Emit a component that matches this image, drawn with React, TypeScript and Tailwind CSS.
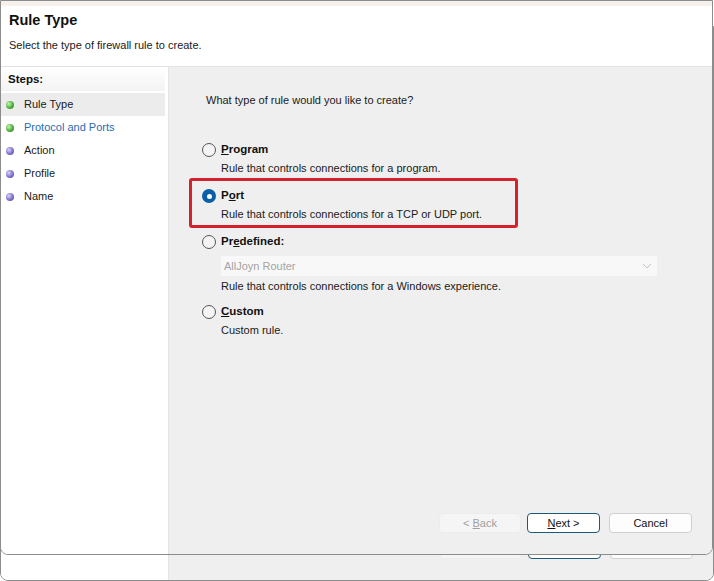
import React from "react"

const font = { fontFamily: '"Liberation Sans", Arial, sans-serif' }

function Bullet({ done }: { done: boolean }) {
  return (
    <span
      className={
        done
          ? "w-[8px] h-[8px] rounded-full bg-[radial-gradient(circle_at_35%_35%,#c8f5b0,#45a935_60%,#2f7d25)]"
          : "w-[8px] h-[8px] rounded-full bg-[radial-gradient(circle_at_35%_35%,#d9d2f5,#7a68c8_60%,#5546a0)]"
      }
    />
  )
}

function Radio({ checked }: { checked?: boolean }) {
  if (checked)
    return (
      <span className="w-[14px] h-[14px] rounded-full bg-[#0a5ea8] flex items-center justify-center shrink-0">
        <span className="w-[5px] h-[5px] rounded-full bg-white" />
      </span>
    )
  return <span className="w-[14px] h-[14px] rounded-full border border-[#555] bg-[#f4f4f4] shrink-0" />
}

function Option({
  label,
  desc,
  checked,
  children,
}: {
  label: React.ReactNode
  desc: string
  checked?: boolean
  children?: React.ReactNode
}) {
  return (
    <div className="flex flex-col">
      <div className="flex items-center h-[16px] ml-[33px]">
        <Radio checked={checked} />
        <span className="ml-[5px] font-bold text-[11.5px] text-[#111]">{label}</span>
      </div>
      {children}
      <div className="ml-[52px] mt-[2px] h-[16px] leading-[16px] text-[11px] text-[#1a1a1a]">{desc}</div>
    </div>
  )
}

function Buttons({ ghost }: { ghost?: boolean }) {
  return (
    <div className="mt-auto mb-[21px] mr-[20px] flex justify-end">
      <button className="w-[82px] h-[20px] rounded-[4px] bg-[#f5f5f5] border border-[#ececec] text-[11px] text-[#a0a0a0]">
        {!ghost && (
          <>
            &lt; <u>B</u>ack
          </>
        )}
      </button>
      <button className="ml-[6px] w-[73px] h-[20px] rounded-[4px] bg-white border border-[#1e5a78] text-[11px] text-[#111]">
        {!ghost && (
          <>
            <u>N</u>ext &gt;
          </>
        )}
      </button>
      <button className="ml-[9px] w-[83px] h-[20px] rounded-[4px] bg-[#fdfdfd] border border-[#d0d0d0] text-[11px] text-[#111]">
        {!ghost && "Cancel"}
      </button>
    </div>
  )
}

function Wizard({ ghost }: { ghost?: boolean }) {
  const steps = [
    { name: "Rule Type", done: true, active: true },
    { name: "Protocol and Ports", done: true, link: true },
    { name: "Action", done: false },
    { name: "Profile", done: false },
    { name: "Name", done: false },
  ]
  return (
    <div className="w-full h-full flex flex-col bg-white border border-[#8c8c8c] rounded-b-[8px] overflow-hidden">
      <div className="h-[5px] bg-[#f6f1ed] shrink-0" />
      <div className="h-[61px] shrink-0 bg-white border-b border-[#e2e2e2] px-[8px] pt-[5px]">
        {!ghost && (
          <>
            <div className="text-[14.5px] font-bold leading-[18px] text-[#111]">Rule Type</div>
            <div className="mt-[9px] text-[11px] leading-[14px] text-[#1a1a1a]">
              Select the type of firewall rule to create.
            </div>
          </>
        )}
      </div>
      <div className="flex flex-1 min-h-0">
        <div className="w-[167px] shrink-0 bg-white flex flex-col pr-[3px]">
          {!ghost && (
            <>
              <div className="h-[24px] leading-[24px] pl-[7px] text-[11.5px] font-bold text-[#111] bg-[linear-gradient(#ffffff,#f3f3f3)]">
                Steps:
              </div>
              <div className="mt-[2px] flex flex-col">
                {steps.map((s) => (
                  <div
                    key={s.name}
                    className={"h-[23px] flex items-center pl-[5px] gap-[10px] " + (s.active ? "bg-[#ececec]" : "")}
                  >
                    <Bullet done={s.done} />
                    <span className={"text-[11px] " + (s.link ? "text-[#2b6cb0]" : "text-[#1a1a1a]")}>{s.name}</span>
                  </div>
                ))}
              </div>
            </>
          )}
        </div>
        <div className="flex-1 bg-[#efefef] border-l border-[#e4e4e4] flex flex-col relative">
          {!ghost && (
            <>
              <div className="ml-[37px] mt-[25px] h-[16px] leading-[16px] text-[11px] text-[#1a1a1a]">
                What type of rule would you like to create?
              </div>
              <div className="mt-[34px]">
                <Option label={<><u>P</u>rogram</>} desc="Rule that controls connections for a program." />
              </div>
              <div className="mt-[12px]">
                <Option checked label={<>P<u>o</u>rt</>} desc="Rule that controls connections for a TCP or UDP port." />
              </div>
              <div className="mt-[12px]">
                <Option label={<>Pr<u>e</u>defined:</>} desc="Rule that controls connections for a Windows experience.">
                  <div className="ml-[52px] mr-[55px] mt-[6px] h-[20px] bg-[#f8f8f8] flex items-center justify-between px-[3px]">
                    <span className="text-[11px] text-[#a3a3a3]">AllJoyn Router</span>
                    <svg width="10" height="6" viewBox="0 0 10 6" className="mr-[2px]">
                      <path d="M1 1l4 4 4-4" fill="none" stroke="#c2c2c2" strokeWidth="1" />
                    </svg>
                  </div>
                </Option>
              </div>
              <div className="mt-[10px]">
                <Option label={<><u>C</u>ustom</>} desc="Custom rule." />
              </div>
              <div className="absolute left-[20px] top-[111px] w-[329px] h-[50px] border-[3px] border-[#d3222b] rounded-[3px]" />
            </>
          )}
          <Buttons ghost={ghost} />
        </div>
      </div>
    </div>
  )
}

export default function App() {
  return (
    <div className="relative w-[714px] h-[581px] overflow-hidden bg-white" style={font}>
      <div className="absolute left-0 top-[26px] w-[714px] h-[555px]">
        <Wizard ghost />
      </div>
      <div className="absolute left-0 top-0 w-[713px] h-[555px]">
        <Wizard />
      </div>
    </div>
  )
}
